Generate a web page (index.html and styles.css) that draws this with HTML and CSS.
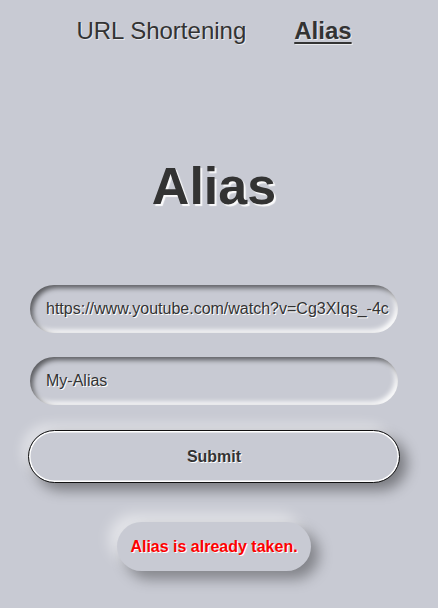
FILE: index.html
```html
<!DOCTYPE html>
<html>
<head>
<meta charset="utf-8">
<link rel="stylesheet" href="styles.css">
</head>
<body>
<div class="page">
  <nav class="nav">
    <a class="nav-link">URL Shortening</a>
    <a class="nav-link active">Alias</a>
  </nav>
  <h1 class="title">Alias</h1>
  <form class="form">
    <div class="field"><span class="field-text">https://www.youtube.com/watch?v=Cg3XIqs_-4c</span></div>
    <div class="field"><span class="field-text">My-Alias</span></div>
    <button type="button" class="submit">Submit</button>
  </form>
  <div class="error-wrap">
    <div class="error">Alias is already taken.</div>
  </div>
</div>
</body>
</html>
```

FILE: styles.css
```css
html, body {
  margin: 0;
  padding: 0;
  background: #c8cad3;
  font-family: "Liberation Sans", Arial, sans-serif;
  color: #333;
}
.page {
  width: 428px;
  height: 608px;
  overflow: hidden;
}
.nav {
  display: flex;
  justify-content: center;
  gap: 48px;
  padding-top: 17px;
}
.nav-link {
  font-size: 24px;
  line-height: 28px;
  color: #333;
  text-shadow: 1px 1px 0 rgba(255,255,255,0.6);
}
.nav-link.active {
  font-weight: bold;
  text-decoration: underline;
  text-decoration-thickness: 2px;
  text-underline-offset: 3px;
}
.title {
  margin: 108px 0 0;
  text-align: center;
  font-size: 52px;
  line-height: 66px;
  font-weight: bold;
  color: #333;
  text-shadow: 2px 2px 1px rgba(255,255,255,0.9);
}
.form {
  margin: 66px 0 0;
  padding: 0 28px;
  display: flex;
  flex-direction: column;
  gap: 24px;
}
.field {
  margin: 0 2px;
  height: 48px;
  border-radius: 24px;
  display: flex;
  align-items: center;
  padding: 0 16px;
  box-shadow: inset 3px 3px 5px rgba(0,0,0,0.55), inset -3px -3px 5px rgba(255,255,255,0.95);
  background: #c8cad3;
  overflow: hidden;
  white-space: nowrap;
}
.field-text {
  font-size: 16px;
  color: #333;
  text-shadow: 1px 1px 0 #fff;
}
.submit {
  margin-top: 1px;
  height: 53px;
  border-radius: 27px;
  border: 1px solid #111;
  background: #c8cad3;
  box-shadow: inset 0 0 0 1.5px #fff, 7px 7px 14px rgba(0,0,0,0.4), -6px -6px 12px rgba(255,255,255,0.45);
  font-family: "Liberation Sans", Arial, sans-serif;
  font-size: 16px;
  font-weight: bold;
  color: #333;
  text-shadow: 1px 1px 0 #fff;
}
.error-wrap {
  display: flex;
  justify-content: center;
  margin-top: 39px;
}
.error {
  width: 194px;
  height: 49px;
  border-radius: 25px;
  display: flex;
  align-items: center;
  justify-content: center;
  background: #c8cad3;
  box-shadow: 8px 8px 14px rgba(0,0,0,0.35), -8px -8px 14px rgba(255,255,255,0.5);
  font-size: 16px;
  font-weight: bold;
  color: #ff0000;
  text-shadow: 1px 1px 0 #fff;
}
```
